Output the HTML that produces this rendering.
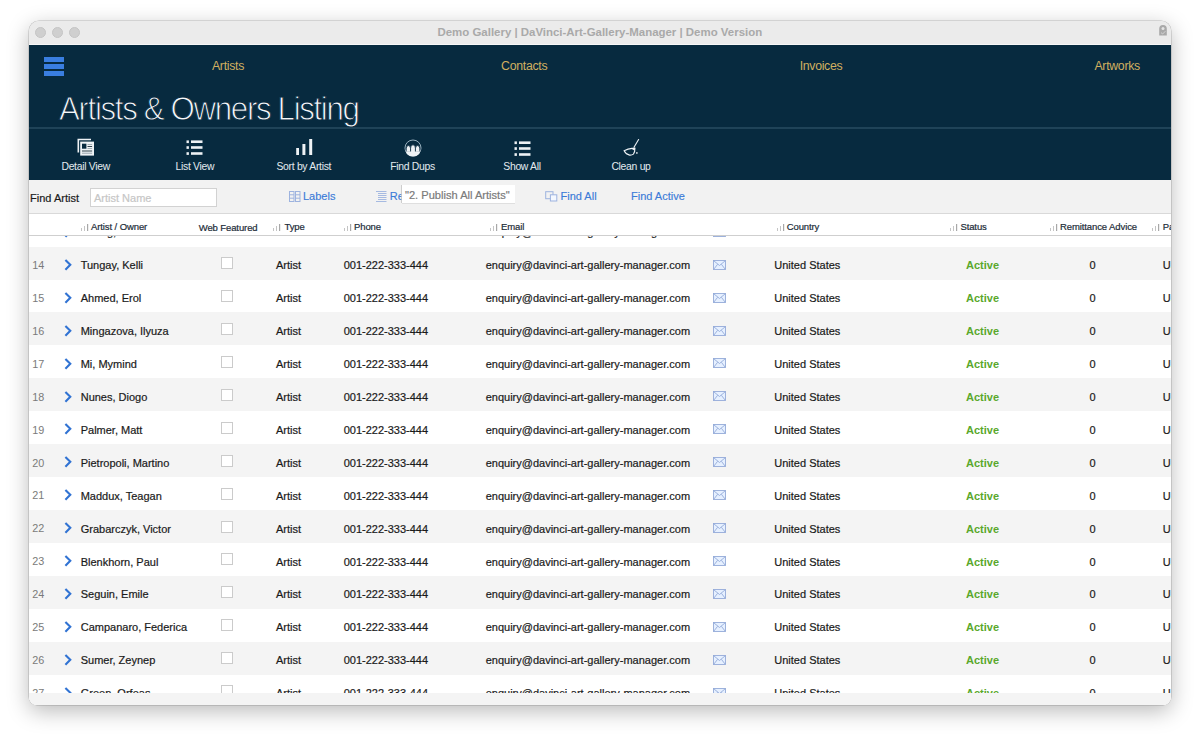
<!DOCTYPE html><html><head><meta charset="utf-8"><style>
html,body{margin:0;padding:0;}
body{width:1200px;height:740px;background:#fff;position:relative;overflow:hidden;font-family:"Liberation Sans",sans-serif;}
.win{position:absolute;left:29px;top:21px;width:1142px;height:684px;border-radius:10px 10px 8px 8px;overflow:hidden;background:#f4f4f4;
 box-shadow:0 0 0 0.5px rgba(0,0,0,0.22),0 6px 22px rgba(0,0,0,0.28);}
.a{position:absolute;white-space:nowrap;line-height:1;}
.tb{position:absolute;left:0;top:0;width:1142px;height:24px;background:#ebebeb;border-bottom:1px solid #f7f7f7;box-sizing:border-box;}
.dot{position:absolute;width:11px;height:11px;border-radius:50%;background:#cfcfcf;border:0.5px solid #c4c4c4;box-sizing:border-box;}
.hdr{position:absolute;left:0;top:24px;width:1142px;height:135px;background:#072a3f;}
.nav{color:#d1b060;font-size:12.3px;letter-spacing:-0.3px;}
.tool{color:#e3eaef;font-size:10.4px;letter-spacing:-0.3px;}
.find{position:absolute;left:0;top:159px;width:1142px;height:34px;background:#f2f2f2;border-bottom:1px solid #d9d9d9;box-sizing:border-box;}
.blue{color:#3b7bd8;font-size:11px;-webkit-text-stroke:0.15px #3b7bd8;}
.th{position:absolute;left:0;top:193px;width:1142px;height:22px;background:#fff;border-bottom:1px solid #cfcfcf;box-sizing:border-box;z-index:2;}
.thl{color:#1c2c38;font-size:9.5px;letter-spacing:-0.1px;-webkit-text-stroke:0.2px #1c2c38;}
.bars{position:absolute;width:7px;height:7px;}
.row{position:absolute;left:0;width:1142px;}
.rn{color:#7a7a7a;font-size:10.8px;}
.rt{color:#1a1a1a;font-size:11px;-webkit-text-stroke:0.2px currentColor;}
.act{color:#5aa82c;font-size:11px;font-weight:bold;}
.cb{position:absolute;width:12px;height:12px;border:1px solid #cbcbcb;background:#fff;box-sizing:border-box;}
.foot{position:absolute;left:0;top:672px;width:1142px;height:13px;background:#f4f4f4;z-index:3;}
</style></head><body><div class="win">
<div class="tb">
<div class="dot" style="left:6.20px;top:6.20px"></div>
<div class="dot" style="left:22.80px;top:6.20px"></div>
<div class="dot" style="left:39.50px;top:6.20px"></div>
<div class="a" style="left:408.5px;top:6.300000000000001px;font-size:11.45px;font-weight:bold;color:#a9a9a9;">Demo Gallery | DaVinci-Art-Gallery-Manager | Demo Version</div>
<svg style="position:absolute;left:1129.5px;top:3.5px" width="8" height="11" viewBox="0 0 8 11"><path d="M0.2 10.6V3.9A3.8 3.8 0 0 1 7.8 3.9V10.6Z" fill="#a9a9a9"/><circle cx="4" cy="3.4" r="1.5" fill="#e4e4e4"/><path d="M2 7.6L3.6 9L6.4 6.2" fill="none" stroke="#d8d8d8" stroke-width="0.9"/></svg>
</div>
<div class="hdr">
</div>
<div style="position:absolute;left:15px;top:36.00px;width:20px;height:4.6px;background:#3a7ee0"></div>
<div style="position:absolute;left:15px;top:43.20px;width:20px;height:4.6px;background:#3a7ee0"></div>
<div style="position:absolute;left:15px;top:50.40px;width:20px;height:4.6px;background:#3a7ee0"></div>
<div class="a nav" style="left:199px;top:39.1px;transform:translateX(-50%)">Artists</div>
<div class="a nav" style="left:495.20000000000005px;top:39.1px;transform:translateX(-50%)">Contacts</div>
<div class="a nav" style="left:792px;top:39.1px;transform:translateX(-50%)">Invoices</div>
<div class="a nav" style="left:1088.2px;top:39.1px;transform:translateX(-50%)">Artworks</div>
<div class="a" style="left:30.299999999999997px;top:69.6px;font-size:34px;letter-spacing:-1.47px;color:#f4f7f9;transform-origin:0 0;transform:scaleX(0.92);-webkit-text-stroke:1px #072a3f;">Artists &amp; Owners Listing</div>
<div style="position:absolute;left:0;top:106px;width:1142px;height:1.5px;background:#1f4358"></div>
<svg style="position:absolute;left:48px;top:117px" width="18" height="19" viewBox="0 0 18 19"><path d="M1.3 14.5V1.5H14" fill="none" stroke="#eef2f5" stroke-width="1.6"/><rect x="3.2" y="3.6" width="13.8" height="14" fill="#eef2f5"/><rect x="5" y="5.7" width="4.4" height="5" fill="#072a3f"/><rect x="10.5" y="6" width="4.6" height="0.9" fill="#9aa6ae"/><rect x="10.5" y="8" width="4.6" height="1" fill="#33444f"/><rect x="10.5" y="10" width="4.6" height="0.9" fill="#9aa6ae"/><rect x="5" y="12.5" width="10.1" height="1" fill="#33444f"/><rect x="5" y="14.7" width="10.1" height="1" fill="#9aa6ae"/></svg>
<svg style="position:absolute;left:157.4px;top:119.19999999999999px" width="17" height="15" viewBox="0 0 17 15"><rect x="0.5" y="0.4" width="2.4" height="2.7" fill="#eef2f5"/><rect x="5" y="0.4" width="11.5" height="2.6" fill="#eef2f5"/><rect x="0.5" y="6.2" width="2.4" height="2.7" fill="#eef2f5"/><rect x="5" y="6.2" width="11.5" height="2.6" fill="#eef2f5"/><rect x="0.5" y="12.2" width="2.4" height="2.7" fill="#eef2f5"/><rect x="5" y="12.2" width="11.5" height="2.6" fill="#eef2f5"/></svg>
<svg style="position:absolute;left:484.5px;top:119.69999999999999px" width="17" height="15" viewBox="0 0 17 15"><rect x="0.5" y="0.4" width="2.4" height="2.7" fill="#eef2f5"/><rect x="5" y="0.4" width="11.5" height="2.6" fill="#eef2f5"/><rect x="0.5" y="6.2" width="2.4" height="2.7" fill="#eef2f5"/><rect x="5" y="6.2" width="11.5" height="2.6" fill="#eef2f5"/><rect x="0.5" y="12.2" width="2.4" height="2.7" fill="#eef2f5"/><rect x="5" y="12.2" width="11.5" height="2.6" fill="#eef2f5"/></svg>
<svg style="position:absolute;left:266.8px;top:118px" width="17" height="16" viewBox="0 0 17 16"><rect x="0.2" y="9" width="2.8" height="7.2" fill="#eef2f5"/><rect x="6.4" y="5" width="3" height="11.2" fill="#eef2f5"/><rect x="13.2" y="0" width="3" height="16.2" fill="#eef2f5"/></svg>
<svg style="position:absolute;left:375px;top:117.5px" width="18" height="18" viewBox="0 0 18 18"><circle cx="9" cy="9" r="8" fill="none" stroke="#a9bfcc" stroke-width="0.9"/><path d="M1.3 11.2 L16.7 11.2 A8 8 0 0 1 1.3 11.2Z" fill="#eef2f5"/><path d="M2.2 13.2 V9.8 A2.2 3.2 0 0 1 6.6 9.8 V13.2Z" fill="#eef2f5" stroke="#072a3f" stroke-width="0.8"/><path d="M11.4 13.2 V9.8 A2.2 3.2 0 0 1 15.8 9.8 V13.2Z" fill="#eef2f5" stroke="#072a3f" stroke-width="0.8"/><path d="M6.6 13.6 V9.2 A2.4 3.4 0 0 1 11.4 9.2 V13.6Z" fill="#eef2f5" stroke="#072a3f" stroke-width="0.8"/><path d="M1.6 12.6 L16.4 12.6 A8 8 0 0 1 1.6 12.6Z" fill="#eef2f5"/></svg>
<svg style="position:absolute;left:593px;top:117px" width="18" height="19" viewBox="0 0 18 19"><path d="M16.6 1.5 L12 9.2" stroke="#eef2f5" stroke-width="1.1" fill="none" stroke-linecap="round"/><path d="M2.1 12.7 Q6 10.9 10 10.4 L12.9 10.3 Q13.1 14.2 11.4 16.1 Q9.8 17.3 7.6 17.1 Q4 16.4 2.1 12.7Z" fill="none" stroke="#eef2f5" stroke-width="1.1"/><path d="M9.4 10.8 L13.2 9.5 L12.8 12.8Z" fill="#eef2f5"/><rect x="14.1" y="14.2" width="1.5" height="1.5" fill="#eef2f5"/></svg>
<div class="a tool" style="left:56.7px;top:140.6px;transform:translateX(-50%)">Detail View</div>
<div class="a tool" style="left:165.9px;top:140.6px;transform:translateX(-50%)">List View</div>
<div class="a tool" style="left:274.8px;top:140.6px;transform:translateX(-50%)">Sort by Artist</div>
<div class="a tool" style="left:383.5px;top:140.6px;transform:translateX(-50%)">Find Dups</div>
<div class="a tool" style="left:493px;top:140.6px;transform:translateX(-50%)">Show All</div>
<div class="a tool" style="left:602px;top:140.6px;transform:translateX(-50%)">Clean up</div>
<div class="find"></div>
<div class="a rt" style="left:1.1000000000000014px;top:172.3px;color:#1a1a1a">Find Artist</div>
<div style="position:absolute;left:61px;top:167px;width:127px;height:19px;background:#fff;border:1px solid #d2d2d2;box-sizing:border-box"></div>
<div class="a rt" style="left:65px;top:171.7px;color:#c6c6c6">Artist Name</div>
<svg style="position:absolute;left:259.5px;top:169.8px" width="12" height="11" viewBox="0 0 12 11"><g fill="none" stroke="#9db3df" stroke-width="1"><rect x="0.5" y="0.5" width="4.5" height="10"/><rect x="6.5" y="0.5" width="4.5" height="10"/><path d="M0.5 3.8H5M0.5 7.2H5M6.5 3.8H11M6.5 7.2H11"/></g></svg>
<div class="a blue" style="left:274px;top:169.9px">Labels</div>
<svg style="position:absolute;left:347px;top:170px" width="11" height="11" viewBox="0 0 11 11"><g stroke="#9db3df" stroke-width="0.9"><path d="M0 0.5H10.5M2 2.5H10.5M2 4.5H10.5M2 6.5H10.5M2 8.5H10.5M0 10.5H10.5"/></g></svg>
<div class="a blue" style="left:360.7px;top:169.9px">Re</div>
<div style="position:absolute;left:372.5px;top:163.5px;width:113px;height:18.5px;background:#fff;box-shadow:-0.8px 0 0 #c4c4c4,0 0.8px 0 #dadada;z-index:1"></div>
<div class="a" style="left:376px;top:168.7px;font-size:11.1px;color:#7a7a7a;-webkit-text-stroke:0.2px #7a7a7a;z-index:1">"2. Publish All Artists"</div>
<svg style="position:absolute;left:516px;top:169.5px" width="13" height="11" viewBox="0 0 13 11"><g fill="none" stroke="#9db3df" stroke-width="1"><rect x="0.7" y="0.7" width="7.3" height="7"/><rect x="5.4" y="3.8" width="6.4" height="6.2"  fill="#f4f8ff"/></g></svg>
<div class="a blue" style="left:531.5px;top:169.9px">Find All</div>
<div class="a blue" style="left:602px;top:169.9px">Find Active</div>
<div class="th">
<svg style="position:absolute;left:52px;top:9.5px" width="8" height="7" viewBox="0 0 8 7"><rect x="0" y="4" width="1" height="3" fill="#c4c4c4"/><rect x="3" y="2" width="1" height="5" fill="#c4c4c4"/><rect x="6" y="0" width="1.2" height="7" fill="#a8a8a8"/></svg>
<div class="a thl" style="left:62px;top:8.20px">Artist / Owner</div>
<svg style="position:absolute;left:244px;top:9.5px" width="8" height="7" viewBox="0 0 8 7"><rect x="0" y="4" width="1" height="3" fill="#c4c4c4"/><rect x="3" y="2" width="1" height="5" fill="#c4c4c4"/><rect x="6" y="0" width="1.2" height="7" fill="#a8a8a8"/></svg>
<div class="a thl" style="left:255.5px;top:8.20px">Type</div>
<svg style="position:absolute;left:314.7px;top:9.5px" width="8" height="7" viewBox="0 0 8 7"><rect x="0" y="4" width="1" height="3" fill="#c4c4c4"/><rect x="3" y="2" width="1" height="5" fill="#c4c4c4"/><rect x="6" y="0" width="1.2" height="7" fill="#a8a8a8"/></svg>
<div class="a thl" style="left:325px;top:8.20px">Phone</div>
<svg style="position:absolute;left:461px;top:9.5px" width="8" height="7" viewBox="0 0 8 7"><rect x="0" y="4" width="1" height="3" fill="#c4c4c4"/><rect x="3" y="2" width="1" height="5" fill="#c4c4c4"/><rect x="6" y="0" width="1.2" height="7" fill="#a8a8a8"/></svg>
<div class="a thl" style="left:472px;top:8.20px">Email</div>
<svg style="position:absolute;left:747.7px;top:9.5px" width="8" height="7" viewBox="0 0 8 7"><rect x="0" y="4" width="1" height="3" fill="#c4c4c4"/><rect x="3" y="2" width="1" height="5" fill="#c4c4c4"/><rect x="6" y="0" width="1.2" height="7" fill="#a8a8a8"/></svg>
<div class="a thl" style="left:757.7px;top:8.20px">Country</div>
<svg style="position:absolute;left:921px;top:9.5px" width="8" height="7" viewBox="0 0 8 7"><rect x="0" y="4" width="1" height="3" fill="#c4c4c4"/><rect x="3" y="2" width="1" height="5" fill="#c4c4c4"/><rect x="6" y="0" width="1.2" height="7" fill="#a8a8a8"/></svg>
<div class="a thl" style="left:931.4px;top:8.20px">Status</div>
<svg style="position:absolute;left:1020.5999999999999px;top:9.5px" width="8" height="7" viewBox="0 0 8 7"><rect x="0" y="4" width="1" height="3" fill="#c4c4c4"/><rect x="3" y="2" width="1" height="5" fill="#c4c4c4"/><rect x="6" y="0" width="1.2" height="7" fill="#a8a8a8"/></svg>
<div class="a thl" style="left:1031px;top:8.20px">Remittance Advice</div>
<svg style="position:absolute;left:1123.4px;top:9.5px" width="8" height="7" viewBox="0 0 8 7"><rect x="0" y="4" width="1" height="3" fill="#c4c4c4"/><rect x="3" y="2" width="1" height="5" fill="#c4c4c4"/><rect x="6" y="0" width="1.2" height="7" fill="#a8a8a8"/></svg>
<div class="a thl" style="left:1133.8px;top:8.20px">Payment</div>
<div class="a thl" style="left:169.7px;top:8.60px">Web Featured</div>
</div>
<div class="row" style="top:192.68px;height:32.92px;background:#ffffff">
<div class="a rn" style="left:3.30px;top:13.40px;">13</div>
<svg style="position:absolute;left:33.6px;top:11.30px" width="10" height="14" viewBox="0 0 10 14"><path d="M2.4 1.9L7.3 6.8L2.4 11.7" fill="none" stroke="#3173d3" stroke-width="2.1"/></svg>
<div class="a rt" style="left:51.70px;top:13.70px;">Chung, Lee</div>
<div class="cb" style="left:192px;top:10.60px"></div>
<div class="a rt" style="left:247.00px;top:13.70px;">Artist</div>
<div class="a rt" style="left:314.70px;top:13.70px;">001-222-333-444</div>
<div class="a rt" style="left:456.70px;top:13.70px;">enquiry@davinci-art-gallery-manager.com</div>
<svg style="position:absolute;left:684.3px;top:13.10px" width="13" height="10" viewBox="0 0 13 10"><rect x="0.5" y="0.5" width="12" height="9" fill="#e6f0ff" stroke="#94abd9" stroke-width="0.9"/><path d="M0.8 0.8L6.5 5.5L12.2 0.8M0.8 9.2L4.6 4.3M12.2 9.2L8.4 4.3" fill="none" stroke="#94abd9" stroke-width="0.9"/></svg>
<div class="a rt" style="left:745.30px;top:13.70px;">United States</div>
<div class="a act" style="left:937.00px;top:13.70px;">Active</div>
<div class="a rt" style="left:1060.60px;top:13.70px;">0</div>
<div class="a rt" style="left:1133.80px;top:13.70px;">USD</div>
</div>
<div class="row" style="top:225.60px;height:32.92px;background:#f4f4f4">
<div class="a rn" style="left:3.30px;top:13.40px;">14</div>
<svg style="position:absolute;left:33.6px;top:11.30px" width="10" height="14" viewBox="0 0 10 14"><path d="M2.4 1.9L7.3 6.8L2.4 11.7" fill="none" stroke="#3173d3" stroke-width="2.1"/></svg>
<div class="a rt" style="left:51.70px;top:13.70px;">Tungay, Kelli</div>
<div class="cb" style="left:192px;top:10.60px"></div>
<div class="a rt" style="left:247.00px;top:13.70px;">Artist</div>
<div class="a rt" style="left:314.70px;top:13.70px;">001-222-333-444</div>
<div class="a rt" style="left:456.70px;top:13.70px;">enquiry@davinci-art-gallery-manager.com</div>
<svg style="position:absolute;left:684.3px;top:13.10px" width="13" height="10" viewBox="0 0 13 10"><rect x="0.5" y="0.5" width="12" height="9" fill="#e6f0ff" stroke="#94abd9" stroke-width="0.9"/><path d="M0.8 0.8L6.5 5.5L12.2 0.8M0.8 9.2L4.6 4.3M12.2 9.2L8.4 4.3" fill="none" stroke="#94abd9" stroke-width="0.9"/></svg>
<div class="a rt" style="left:745.30px;top:13.70px;">United States</div>
<div class="a act" style="left:937.00px;top:13.70px;">Active</div>
<div class="a rt" style="left:1060.60px;top:13.70px;">0</div>
<div class="a rt" style="left:1133.80px;top:13.70px;">USD</div>
</div>
<div class="row" style="top:258.52px;height:32.92px;background:#ffffff">
<div class="a rn" style="left:3.30px;top:13.40px;">15</div>
<svg style="position:absolute;left:33.6px;top:11.30px" width="10" height="14" viewBox="0 0 10 14"><path d="M2.4 1.9L7.3 6.8L2.4 11.7" fill="none" stroke="#3173d3" stroke-width="2.1"/></svg>
<div class="a rt" style="left:51.70px;top:13.70px;">Ahmed, Erol</div>
<div class="cb" style="left:192px;top:10.60px"></div>
<div class="a rt" style="left:247.00px;top:13.70px;">Artist</div>
<div class="a rt" style="left:314.70px;top:13.70px;">001-222-333-444</div>
<div class="a rt" style="left:456.70px;top:13.70px;">enquiry@davinci-art-gallery-manager.com</div>
<svg style="position:absolute;left:684.3px;top:13.10px" width="13" height="10" viewBox="0 0 13 10"><rect x="0.5" y="0.5" width="12" height="9" fill="#e6f0ff" stroke="#94abd9" stroke-width="0.9"/><path d="M0.8 0.8L6.5 5.5L12.2 0.8M0.8 9.2L4.6 4.3M12.2 9.2L8.4 4.3" fill="none" stroke="#94abd9" stroke-width="0.9"/></svg>
<div class="a rt" style="left:745.30px;top:13.70px;">United States</div>
<div class="a act" style="left:937.00px;top:13.70px;">Active</div>
<div class="a rt" style="left:1060.60px;top:13.70px;">0</div>
<div class="a rt" style="left:1133.80px;top:13.70px;">USD</div>
</div>
<div class="row" style="top:291.44px;height:32.92px;background:#f4f4f4">
<div class="a rn" style="left:3.30px;top:13.40px;">16</div>
<svg style="position:absolute;left:33.6px;top:11.30px" width="10" height="14" viewBox="0 0 10 14"><path d="M2.4 1.9L7.3 6.8L2.4 11.7" fill="none" stroke="#3173d3" stroke-width="2.1"/></svg>
<div class="a rt" style="left:51.70px;top:13.70px;">Mingazova, Ilyuza</div>
<div class="cb" style="left:192px;top:10.60px"></div>
<div class="a rt" style="left:247.00px;top:13.70px;">Artist</div>
<div class="a rt" style="left:314.70px;top:13.70px;">001-222-333-444</div>
<div class="a rt" style="left:456.70px;top:13.70px;">enquiry@davinci-art-gallery-manager.com</div>
<svg style="position:absolute;left:684.3px;top:13.10px" width="13" height="10" viewBox="0 0 13 10"><rect x="0.5" y="0.5" width="12" height="9" fill="#e6f0ff" stroke="#94abd9" stroke-width="0.9"/><path d="M0.8 0.8L6.5 5.5L12.2 0.8M0.8 9.2L4.6 4.3M12.2 9.2L8.4 4.3" fill="none" stroke="#94abd9" stroke-width="0.9"/></svg>
<div class="a rt" style="left:745.30px;top:13.70px;">United States</div>
<div class="a act" style="left:937.00px;top:13.70px;">Active</div>
<div class="a rt" style="left:1060.60px;top:13.70px;">0</div>
<div class="a rt" style="left:1133.80px;top:13.70px;">USD</div>
</div>
<div class="row" style="top:324.36px;height:32.92px;background:#ffffff">
<div class="a rn" style="left:3.30px;top:13.40px;">17</div>
<svg style="position:absolute;left:33.6px;top:11.30px" width="10" height="14" viewBox="0 0 10 14"><path d="M2.4 1.9L7.3 6.8L2.4 11.7" fill="none" stroke="#3173d3" stroke-width="2.1"/></svg>
<div class="a rt" style="left:51.70px;top:13.70px;">Mi, Mymind</div>
<div class="cb" style="left:192px;top:10.60px"></div>
<div class="a rt" style="left:247.00px;top:13.70px;">Artist</div>
<div class="a rt" style="left:314.70px;top:13.70px;">001-222-333-444</div>
<div class="a rt" style="left:456.70px;top:13.70px;">enquiry@davinci-art-gallery-manager.com</div>
<svg style="position:absolute;left:684.3px;top:13.10px" width="13" height="10" viewBox="0 0 13 10"><rect x="0.5" y="0.5" width="12" height="9" fill="#e6f0ff" stroke="#94abd9" stroke-width="0.9"/><path d="M0.8 0.8L6.5 5.5L12.2 0.8M0.8 9.2L4.6 4.3M12.2 9.2L8.4 4.3" fill="none" stroke="#94abd9" stroke-width="0.9"/></svg>
<div class="a rt" style="left:745.30px;top:13.70px;">United States</div>
<div class="a act" style="left:937.00px;top:13.70px;">Active</div>
<div class="a rt" style="left:1060.60px;top:13.70px;">0</div>
<div class="a rt" style="left:1133.80px;top:13.70px;">USD</div>
</div>
<div class="row" style="top:357.28px;height:32.92px;background:#f4f4f4">
<div class="a rn" style="left:3.30px;top:13.40px;">18</div>
<svg style="position:absolute;left:33.6px;top:11.30px" width="10" height="14" viewBox="0 0 10 14"><path d="M2.4 1.9L7.3 6.8L2.4 11.7" fill="none" stroke="#3173d3" stroke-width="2.1"/></svg>
<div class="a rt" style="left:51.70px;top:13.70px;">Nunes, Diogo</div>
<div class="cb" style="left:192px;top:10.60px"></div>
<div class="a rt" style="left:247.00px;top:13.70px;">Artist</div>
<div class="a rt" style="left:314.70px;top:13.70px;">001-222-333-444</div>
<div class="a rt" style="left:456.70px;top:13.70px;">enquiry@davinci-art-gallery-manager.com</div>
<svg style="position:absolute;left:684.3px;top:13.10px" width="13" height="10" viewBox="0 0 13 10"><rect x="0.5" y="0.5" width="12" height="9" fill="#e6f0ff" stroke="#94abd9" stroke-width="0.9"/><path d="M0.8 0.8L6.5 5.5L12.2 0.8M0.8 9.2L4.6 4.3M12.2 9.2L8.4 4.3" fill="none" stroke="#94abd9" stroke-width="0.9"/></svg>
<div class="a rt" style="left:745.30px;top:13.70px;">United States</div>
<div class="a act" style="left:937.00px;top:13.70px;">Active</div>
<div class="a rt" style="left:1060.60px;top:13.70px;">0</div>
<div class="a rt" style="left:1133.80px;top:13.70px;">USD</div>
</div>
<div class="row" style="top:390.20px;height:32.92px;background:#ffffff">
<div class="a rn" style="left:3.30px;top:13.40px;">19</div>
<svg style="position:absolute;left:33.6px;top:11.30px" width="10" height="14" viewBox="0 0 10 14"><path d="M2.4 1.9L7.3 6.8L2.4 11.7" fill="none" stroke="#3173d3" stroke-width="2.1"/></svg>
<div class="a rt" style="left:51.70px;top:13.70px;">Palmer, Matt</div>
<div class="cb" style="left:192px;top:10.60px"></div>
<div class="a rt" style="left:247.00px;top:13.70px;">Artist</div>
<div class="a rt" style="left:314.70px;top:13.70px;">001-222-333-444</div>
<div class="a rt" style="left:456.70px;top:13.70px;">enquiry@davinci-art-gallery-manager.com</div>
<svg style="position:absolute;left:684.3px;top:13.10px" width="13" height="10" viewBox="0 0 13 10"><rect x="0.5" y="0.5" width="12" height="9" fill="#e6f0ff" stroke="#94abd9" stroke-width="0.9"/><path d="M0.8 0.8L6.5 5.5L12.2 0.8M0.8 9.2L4.6 4.3M12.2 9.2L8.4 4.3" fill="none" stroke="#94abd9" stroke-width="0.9"/></svg>
<div class="a rt" style="left:745.30px;top:13.70px;">United States</div>
<div class="a act" style="left:937.00px;top:13.70px;">Active</div>
<div class="a rt" style="left:1060.60px;top:13.70px;">0</div>
<div class="a rt" style="left:1133.80px;top:13.70px;">USD</div>
</div>
<div class="row" style="top:423.12px;height:32.92px;background:#f4f4f4">
<div class="a rn" style="left:3.30px;top:13.40px;">20</div>
<svg style="position:absolute;left:33.6px;top:11.30px" width="10" height="14" viewBox="0 0 10 14"><path d="M2.4 1.9L7.3 6.8L2.4 11.7" fill="none" stroke="#3173d3" stroke-width="2.1"/></svg>
<div class="a rt" style="left:51.70px;top:13.70px;">Pietropoli, Martino</div>
<div class="cb" style="left:192px;top:10.60px"></div>
<div class="a rt" style="left:247.00px;top:13.70px;">Artist</div>
<div class="a rt" style="left:314.70px;top:13.70px;">001-222-333-444</div>
<div class="a rt" style="left:456.70px;top:13.70px;">enquiry@davinci-art-gallery-manager.com</div>
<svg style="position:absolute;left:684.3px;top:13.10px" width="13" height="10" viewBox="0 0 13 10"><rect x="0.5" y="0.5" width="12" height="9" fill="#e6f0ff" stroke="#94abd9" stroke-width="0.9"/><path d="M0.8 0.8L6.5 5.5L12.2 0.8M0.8 9.2L4.6 4.3M12.2 9.2L8.4 4.3" fill="none" stroke="#94abd9" stroke-width="0.9"/></svg>
<div class="a rt" style="left:745.30px;top:13.70px;">United States</div>
<div class="a act" style="left:937.00px;top:13.70px;">Active</div>
<div class="a rt" style="left:1060.60px;top:13.70px;">0</div>
<div class="a rt" style="left:1133.80px;top:13.70px;">USD</div>
</div>
<div class="row" style="top:456.04px;height:32.92px;background:#ffffff">
<div class="a rn" style="left:3.30px;top:13.40px;">21</div>
<svg style="position:absolute;left:33.6px;top:11.30px" width="10" height="14" viewBox="0 0 10 14"><path d="M2.4 1.9L7.3 6.8L2.4 11.7" fill="none" stroke="#3173d3" stroke-width="2.1"/></svg>
<div class="a rt" style="left:51.70px;top:13.70px;">Maddux, Teagan</div>
<div class="cb" style="left:192px;top:10.60px"></div>
<div class="a rt" style="left:247.00px;top:13.70px;">Artist</div>
<div class="a rt" style="left:314.70px;top:13.70px;">001-222-333-444</div>
<div class="a rt" style="left:456.70px;top:13.70px;">enquiry@davinci-art-gallery-manager.com</div>
<svg style="position:absolute;left:684.3px;top:13.10px" width="13" height="10" viewBox="0 0 13 10"><rect x="0.5" y="0.5" width="12" height="9" fill="#e6f0ff" stroke="#94abd9" stroke-width="0.9"/><path d="M0.8 0.8L6.5 5.5L12.2 0.8M0.8 9.2L4.6 4.3M12.2 9.2L8.4 4.3" fill="none" stroke="#94abd9" stroke-width="0.9"/></svg>
<div class="a rt" style="left:745.30px;top:13.70px;">United States</div>
<div class="a act" style="left:937.00px;top:13.70px;">Active</div>
<div class="a rt" style="left:1060.60px;top:13.70px;">0</div>
<div class="a rt" style="left:1133.80px;top:13.70px;">USD</div>
</div>
<div class="row" style="top:488.96px;height:32.92px;background:#f4f4f4">
<div class="a rn" style="left:3.30px;top:13.40px;">22</div>
<svg style="position:absolute;left:33.6px;top:11.30px" width="10" height="14" viewBox="0 0 10 14"><path d="M2.4 1.9L7.3 6.8L2.4 11.7" fill="none" stroke="#3173d3" stroke-width="2.1"/></svg>
<div class="a rt" style="left:51.70px;top:13.70px;">Grabarczyk, Victor</div>
<div class="cb" style="left:192px;top:10.60px"></div>
<div class="a rt" style="left:247.00px;top:13.70px;">Artist</div>
<div class="a rt" style="left:314.70px;top:13.70px;">001-222-333-444</div>
<div class="a rt" style="left:456.70px;top:13.70px;">enquiry@davinci-art-gallery-manager.com</div>
<svg style="position:absolute;left:684.3px;top:13.10px" width="13" height="10" viewBox="0 0 13 10"><rect x="0.5" y="0.5" width="12" height="9" fill="#e6f0ff" stroke="#94abd9" stroke-width="0.9"/><path d="M0.8 0.8L6.5 5.5L12.2 0.8M0.8 9.2L4.6 4.3M12.2 9.2L8.4 4.3" fill="none" stroke="#94abd9" stroke-width="0.9"/></svg>
<div class="a rt" style="left:745.30px;top:13.70px;">United States</div>
<div class="a act" style="left:937.00px;top:13.70px;">Active</div>
<div class="a rt" style="left:1060.60px;top:13.70px;">0</div>
<div class="a rt" style="left:1133.80px;top:13.70px;">USD</div>
</div>
<div class="row" style="top:521.88px;height:32.92px;background:#ffffff">
<div class="a rn" style="left:3.30px;top:13.40px;">23</div>
<svg style="position:absolute;left:33.6px;top:11.30px" width="10" height="14" viewBox="0 0 10 14"><path d="M2.4 1.9L7.3 6.8L2.4 11.7" fill="none" stroke="#3173d3" stroke-width="2.1"/></svg>
<div class="a rt" style="left:51.70px;top:13.70px;">Blenkhorn, Paul</div>
<div class="cb" style="left:192px;top:10.60px"></div>
<div class="a rt" style="left:247.00px;top:13.70px;">Artist</div>
<div class="a rt" style="left:314.70px;top:13.70px;">001-222-333-444</div>
<div class="a rt" style="left:456.70px;top:13.70px;">enquiry@davinci-art-gallery-manager.com</div>
<svg style="position:absolute;left:684.3px;top:13.10px" width="13" height="10" viewBox="0 0 13 10"><rect x="0.5" y="0.5" width="12" height="9" fill="#e6f0ff" stroke="#94abd9" stroke-width="0.9"/><path d="M0.8 0.8L6.5 5.5L12.2 0.8M0.8 9.2L4.6 4.3M12.2 9.2L8.4 4.3" fill="none" stroke="#94abd9" stroke-width="0.9"/></svg>
<div class="a rt" style="left:745.30px;top:13.70px;">United States</div>
<div class="a act" style="left:937.00px;top:13.70px;">Active</div>
<div class="a rt" style="left:1060.60px;top:13.70px;">0</div>
<div class="a rt" style="left:1133.80px;top:13.70px;">USD</div>
</div>
<div class="row" style="top:554.80px;height:32.92px;background:#f4f4f4">
<div class="a rn" style="left:3.30px;top:13.40px;">24</div>
<svg style="position:absolute;left:33.6px;top:11.30px" width="10" height="14" viewBox="0 0 10 14"><path d="M2.4 1.9L7.3 6.8L2.4 11.7" fill="none" stroke="#3173d3" stroke-width="2.1"/></svg>
<div class="a rt" style="left:51.70px;top:13.70px;">Seguin, Emile</div>
<div class="cb" style="left:192px;top:10.60px"></div>
<div class="a rt" style="left:247.00px;top:13.70px;">Artist</div>
<div class="a rt" style="left:314.70px;top:13.70px;">001-222-333-444</div>
<div class="a rt" style="left:456.70px;top:13.70px;">enquiry@davinci-art-gallery-manager.com</div>
<svg style="position:absolute;left:684.3px;top:13.10px" width="13" height="10" viewBox="0 0 13 10"><rect x="0.5" y="0.5" width="12" height="9" fill="#e6f0ff" stroke="#94abd9" stroke-width="0.9"/><path d="M0.8 0.8L6.5 5.5L12.2 0.8M0.8 9.2L4.6 4.3M12.2 9.2L8.4 4.3" fill="none" stroke="#94abd9" stroke-width="0.9"/></svg>
<div class="a rt" style="left:745.30px;top:13.70px;">United States</div>
<div class="a act" style="left:937.00px;top:13.70px;">Active</div>
<div class="a rt" style="left:1060.60px;top:13.70px;">0</div>
<div class="a rt" style="left:1133.80px;top:13.70px;">USD</div>
</div>
<div class="row" style="top:587.72px;height:32.92px;background:#ffffff">
<div class="a rn" style="left:3.30px;top:13.40px;">25</div>
<svg style="position:absolute;left:33.6px;top:11.30px" width="10" height="14" viewBox="0 0 10 14"><path d="M2.4 1.9L7.3 6.8L2.4 11.7" fill="none" stroke="#3173d3" stroke-width="2.1"/></svg>
<div class="a rt" style="left:51.70px;top:13.70px;">Campanaro, Federica</div>
<div class="cb" style="left:192px;top:10.60px"></div>
<div class="a rt" style="left:247.00px;top:13.70px;">Artist</div>
<div class="a rt" style="left:314.70px;top:13.70px;">001-222-333-444</div>
<div class="a rt" style="left:456.70px;top:13.70px;">enquiry@davinci-art-gallery-manager.com</div>
<svg style="position:absolute;left:684.3px;top:13.10px" width="13" height="10" viewBox="0 0 13 10"><rect x="0.5" y="0.5" width="12" height="9" fill="#e6f0ff" stroke="#94abd9" stroke-width="0.9"/><path d="M0.8 0.8L6.5 5.5L12.2 0.8M0.8 9.2L4.6 4.3M12.2 9.2L8.4 4.3" fill="none" stroke="#94abd9" stroke-width="0.9"/></svg>
<div class="a rt" style="left:745.30px;top:13.70px;">United States</div>
<div class="a act" style="left:937.00px;top:13.70px;">Active</div>
<div class="a rt" style="left:1060.60px;top:13.70px;">0</div>
<div class="a rt" style="left:1133.80px;top:13.70px;">USD</div>
</div>
<div class="row" style="top:620.64px;height:32.92px;background:#f4f4f4">
<div class="a rn" style="left:3.30px;top:13.40px;">26</div>
<svg style="position:absolute;left:33.6px;top:11.30px" width="10" height="14" viewBox="0 0 10 14"><path d="M2.4 1.9L7.3 6.8L2.4 11.7" fill="none" stroke="#3173d3" stroke-width="2.1"/></svg>
<div class="a rt" style="left:51.70px;top:13.70px;">Sumer, Zeynep</div>
<div class="cb" style="left:192px;top:10.60px"></div>
<div class="a rt" style="left:247.00px;top:13.70px;">Artist</div>
<div class="a rt" style="left:314.70px;top:13.70px;">001-222-333-444</div>
<div class="a rt" style="left:456.70px;top:13.70px;">enquiry@davinci-art-gallery-manager.com</div>
<svg style="position:absolute;left:684.3px;top:13.10px" width="13" height="10" viewBox="0 0 13 10"><rect x="0.5" y="0.5" width="12" height="9" fill="#e6f0ff" stroke="#94abd9" stroke-width="0.9"/><path d="M0.8 0.8L6.5 5.5L12.2 0.8M0.8 9.2L4.6 4.3M12.2 9.2L8.4 4.3" fill="none" stroke="#94abd9" stroke-width="0.9"/></svg>
<div class="a rt" style="left:745.30px;top:13.70px;">United States</div>
<div class="a act" style="left:937.00px;top:13.70px;">Active</div>
<div class="a rt" style="left:1060.60px;top:13.70px;">0</div>
<div class="a rt" style="left:1133.80px;top:13.70px;">USD</div>
</div>
<div class="row" style="top:653.56px;height:32.92px;background:#ffffff">
<div class="a rn" style="left:3.30px;top:13.40px;">27</div>
<svg style="position:absolute;left:33.6px;top:11.30px" width="10" height="14" viewBox="0 0 10 14"><path d="M2.4 1.9L7.3 6.8L2.4 11.7" fill="none" stroke="#3173d3" stroke-width="2.1"/></svg>
<div class="a rt" style="left:51.70px;top:13.70px;">Green, Orfeas</div>
<div class="cb" style="left:192px;top:10.60px"></div>
<div class="a rt" style="left:247.00px;top:13.70px;">Artist</div>
<div class="a rt" style="left:314.70px;top:13.70px;">001-222-333-444</div>
<div class="a rt" style="left:456.70px;top:13.70px;">enquiry@davinci-art-gallery-manager.com</div>
<svg style="position:absolute;left:684.3px;top:13.10px" width="13" height="10" viewBox="0 0 13 10"><rect x="0.5" y="0.5" width="12" height="9" fill="#e6f0ff" stroke="#94abd9" stroke-width="0.9"/><path d="M0.8 0.8L6.5 5.5L12.2 0.8M0.8 9.2L4.6 4.3M12.2 9.2L8.4 4.3" fill="none" stroke="#94abd9" stroke-width="0.9"/></svg>
<div class="a rt" style="left:745.30px;top:13.70px;">United States</div>
<div class="a act" style="left:937.00px;top:13.70px;">Active</div>
<div class="a rt" style="left:1060.60px;top:13.70px;">0</div>
<div class="a rt" style="left:1133.80px;top:13.70px;">USD</div>
</div>
<div class="foot"></div>
</div></body></html>
